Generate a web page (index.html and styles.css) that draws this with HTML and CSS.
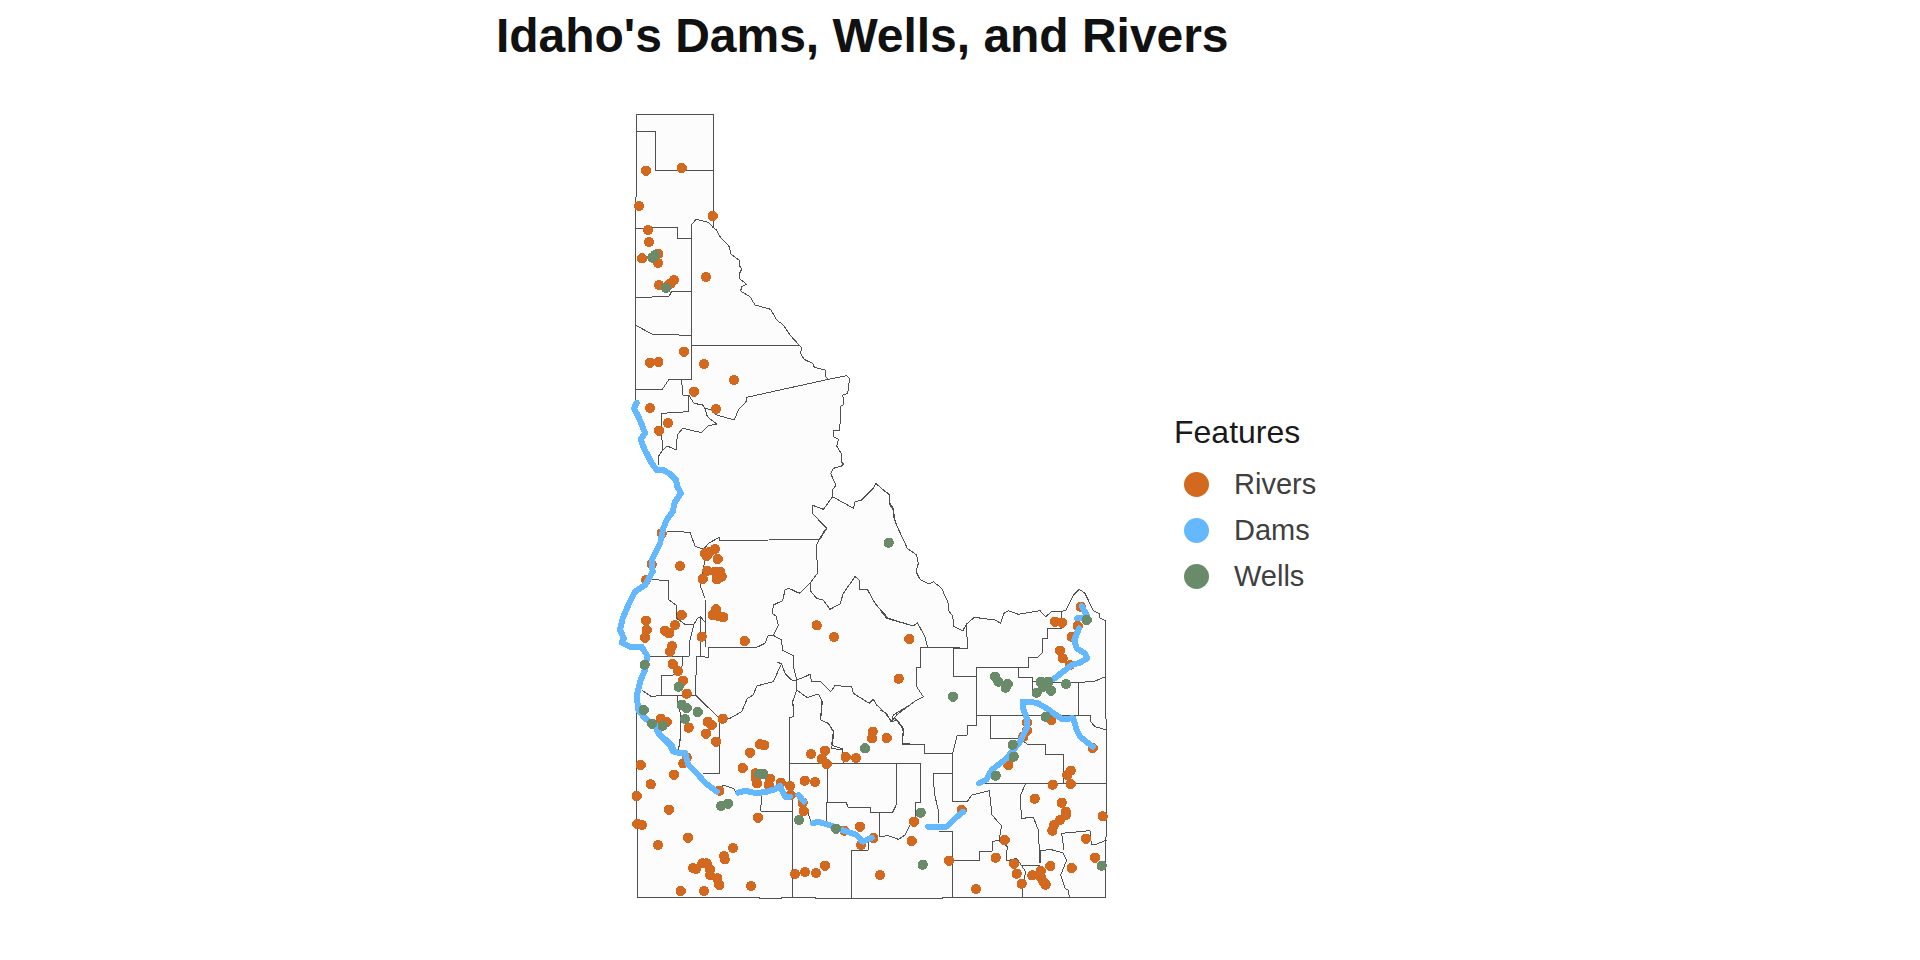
FILE: index.html
```html
<!DOCTYPE html>
<html lang="en">
<head>
    <meta charset="UTF-8">
    <title>Idaho's Dams, Wells, and Rivers</title>
    <link rel="stylesheet" href="styles.css">
</head>
<body>
    <h1 class="plot-title">Idaho's Dams, Wells, and Rivers</h1>

    <div class="plot-body">
        <!-- map units are 1/3 px, the groups are one per area of the state -->
        <svg class="map" viewBox="-60 0 1560 2430" width="520" height="810">
            <polygon class="state" points="49,43 280,43 280,383 290,390 300,410 328,440 333,463 357,480 358,497 365,507 359,520 360,537 380,553 365,560 362,573 390,590 405,615 452,628 470,660 490,675 510,705 540,738 545,742 542,760 552,778 578,790 583,802 615,810 617,830 625,838 680,827 689,835 683,880 668,885 672,913 663,918 659,990 640,993 640,1010 655,1018 650,1038 665,1063 664,1085 670,1092 665,1098 640,1105 632,1120 645,1150 645,1160 637,1170 638,1190 700,1225 705,1205 725,1200 760,1165 767,1150 808,1185 810,1210 820,1225 820,1250 830,1275 862,1345 890,1365 895,1390 888,1415 900,1438 928,1452 940,1445 965,1465 985,1510 986,1532 998,1548 1002,1580 1028,1593 1040,1572 1063,1552 1125,1560 1142,1570 1152,1540 1165,1532 1195,1543 1260,1532 1277,1550 1295,1535 1338,1530 1360,1485 1378,1468 1395,1480 1420,1532 1437,1540 1440,1555 1457,1562 1457,2392 52,2392 50,1830 55,1830 52,1780 62,1740 75,1710 82,1668 65,1642 30,1640 5,1628 12,1615 0,1590 8,1555 25,1515 45,1475 75,1455 98,1415 95,1380 120,1330 133,1290 130,1285 140,1260 158,1235 165,1205 183,1180 172,1160 168,1140 150,1122 130,1112 110,1110 95,1090 85,1070 72,1045 62,1018 75,1000 68,980 55,950 42,925 46,868 46,290 49,290"/>

            <g class="counties">
                <g>
                    <path d="M49 290V43H280V383"/>
                    <path d="M49 94H106V211H280"/>
                    <path d="M46 290V660"/>
                    <path d="M46 385L155 382H172V415H214"/>
                    <path d="M214 660V375L228 358L265 367L280 383L290 390L300 410L328 440L333 463L357 480L358 497L365 507L359 520L360 537L380 553L365 560L362 573L390 590L405 615L452 628L470 660"/>
                    <path d="M46 592H95L97 589H147L155 574H214"/>
                </g>
                <g transform="translate(0,660)">
                    <path d="M46 0V240"/>
                    <path d="M214 0V178H147L127 208H46"/>
                    <path d="M46 15L97 43L214 46"/>
                    <path d="M214 76H537"/>
                    <path d="M470 0L490 15L510 45L540 78L545 82L542 100L552 118L578 130L583 142L615 150L617 170L625 178"/>
                    <path d="M380 232L625 178L680 167L689 175L683 220L668 225L672 253L663 258L659 330L640 333L640 350L655 358L650 378L665 403L664 425L670 432L665 438L640 445L632 460L645 490L645 500L637 510L638 530L610 568L578 556L577 580L620 625L600 658H447"/>
                    <path d="M638 530L700 565L705 545L725 540L760 505L767 490L808 525L810 550L820 565L820 590L830 615L850 660"/>
                    <path d="M380 232L378 245L355 270L343 300L290 285L275 270L255 265L248 255L222 250L206 225H188L185 178"/>
                    <path d="M206 225V275L125 280V325L127 392"/>
                    <path d="M255 265L262 290L290 312L263 318L245 338L188 325L172 345L168 390L142 378L127 392L115 410V435"/>
                </g>
                <g transform="translate(-30,1290)">
                    <path d="M170 3L240 7L256 50L282 57L295 40L328 22V32L478 30L628 28L645 0"/>
                    <path d="M285 55L290 70L272 150L270 165L285 205L287 352"/>
                    <path d="M260 378L295 382L297 352H440L465 340L475 315L490 316L515 330L517 360L552 378L550 410L560 450V480"/>
                    <path d="M490 316L505 285L498 258L487 250L490 225L518 212L525 180L537 175L568 190L600 160L622 130L620 45L628 28"/>
                    <path d="M600 160L603 185L620 205L640 210L660 238L690 222L700 190L735 140L748 150L747 180L772 178L795 220L835 265L900 285"/>
                    <path d="M120 148L175 152L177 210L198 225L200 265L225 283H252L262 265L272 260L286 278"/>
                    <path d="M252 283L240 330L238 378H105"/>
                    <path d="M272 262V378"/>
                    <path d="M260 378L256 495L328 565V660"/>
                    <path d="M218 380V405L190 435H155V495H256"/>
                    <path d="M95 480L125 500L155 495"/>
                    <path d="M202 495V525L212 550V615L205 660"/>
                    <path d="M328 565H360L395 545L412 505L430 495L440 468L490 455L515 400L503 398L515 402L525 430L545 450H560"/>
                    <path d="M560 480L548 515L552 560L538 563V660"/>
                    <path d="M560 480L592 503L625 492L637 515L632 570L655 580L670 605L665 645L700 658"/>
                    <path d="M560 450L585 440L600 433L605 455H632L662 485L675 467L725 470L730 490L778 520L790 508L800 525L825 548L845 575L862 570L880 595L877 640H900"/>
                    <path d="M845 575L850 555L900 525"/>
                </g>
                <g transform="translate(-30,1800)">
                    <path d="M80 30V150L82 592H447V595H515V592H615V595H1000"/>
                    <path d="M328 100V220H278"/>
                    <path d="M212 60V110L205 155"/>
                    <path d="M330 265L340 255L370 265L380 280H455L452 333H547"/>
                    <path d="M548 0L552 50L538 53V265L547 290V592"/>
                    <path d="M635 0L632 60L655 70L672 95L665 145L697 150L700 190"/>
                    <path d="M538 190H932V307H917V360L900 375L885 405L865 418L835 407L808 410"/>
                    <path d="M652 190V307H708L715 322H782V337H848L860 312V190"/>
                    <path d="M648 307V375"/>
                    <path d="M808 337V410"/>
                    <path d="M595 340L605 375"/>
                    <path d="M725 595V525L725 450H775V425"/>
                </g>
                <g transform="translate(780,1800)">
                    <path d="M0 30L20 40L32 65L45 55L65 80L70 95L67 132H134V160H218V305H262L275 285L328 272L336 345L365 378L357 420L337 425V453H298V481H218"/>
                    <path d="M32 65L50 45L110 0"/>
                    <path d="M218 393V592"/>
                    <path d="M176 393H218"/>
                    <path d="M160 220H218"/>
                    <path d="M160 220L163 280L176 335V370"/>
                    <path d="M50 190V310L38 337H0"/>
                    <path d="M218 160L232 105H262V75H290V0"/>
                    <path d="M290 45H632V65L645 80L680 90"/>
                    <path d="M332 45V115H415L442 132H497V163H550V250"/>
                    <path d="M596 0V48"/>
                    <path d="M290 250H680"/>
                    <path d="M677 0V55L680 60V395L677 420V592H188V595H0"/>
                    <path d="M357 422L382 440L378 483L410 475L437 515L427 560V592"/>
                    <path d="M437 250L420 290L425 355L460 352L475 390L480 490V453L510 448L548 458L560 480L542 525L555 565L565 570L568 592"/>
                    <path d="M425 495H480"/>
                    <path d="M552 450L545 400L630 392L634 432H650L680 420"/>
                </g>
                <g transform="translate(780,1140)">
                    <path d="M0 22L28 43L30 75L40 90L47 130L82 205L110 225L115 250L108 275L120 298L148 312L160 305L185 325L205 370L206 392L218 408L222 440L248 453L260 432L283 412L345 420L362 430L372 400L385 392L415 403L480 392L497 410L515 395H545L558 390L580 345L598 328L615 340L640 392L657 400L660 415L677 422V660"/>
                    <path d="M545 395V445H502V475H487V518L472 533H445V562H290V660"/>
                    <path d="M260 432L262 505H220V590H290"/>
                    <path d="M240 502H122V562H108L110 620L130 650L110 660"/>
                    <path d="M0 390L20 415L100 438L112 428L135 470L142 500"/>
                    <path d="M415 562V592H458V640"/>
                    <path d="M458 605L595 608L645 603L677 590"/>
                    <path d="M595 608V660"/>
                </g>
            </g>

            <g class="rivers">
                <path d="M78 212h0M185 204h0M57 318h0M278 348h0M84 390h0M87 426h0M115 461h0M66 475h0M114 489h0M258 531h0M162 540h0M152 550h0M143 558h0M117 555h0"/>
                <path transform="translate(0,660)" d="M192 95h0M115 126h0M90 128h0M252 132h0M342 180h0M222 215h0M288 267h0M90 264h0M144 309h0M117 332h0M125 640h0"/>
                <path transform="translate(-30,1290)" d="M125 103h0M108 150h0M210 108h0M315 57h0M300 65h0M285 70h0M290 78h0M323 87h0M292 122h0M315 125h0M330 125h0M335 140h0M320 148h0M278 147h0M318 238h0M308 255h0M325 258h0M340 262h0M215 255h0M108 272h0M110 300h0M105 323h0M195 285h0M165 302h0M178 310h0M275 320h0M404 333h0M186 348h0M180 365h0M188 402h0M204 423h0M219 452h0M230 491h0M338 566h0M152 566h0M170 576h0M293 575h0M305 585h0M288 611h0M236 593h0M318 635h0M620 286h0M672 321h0M866 446h0M898 327h0M788 605h0M786 625h0M830 624h0M450 643h0M463 646h0"/>
                <path transform="translate(-30,1800)" d="M420 158h0M603 162h0M645 152h0M635 177h0M650 192h0M707 171h0M738 174h0M230 172h0M220 190h0M92 195h0M192 224h0M122 253h0M80 288h0M398 204h0M437 220h0M437 235h0M441 250h0M480 236h0M476 255h0M512 248h0M540 258h0M542 285h0M584 242h0M615 246h0M328 272h0M177 329h0M578 308h0M581 333h0M444 353h0M82 372h0M96 375h0M703 392h0M750 380h0M790 414h0M753 435h0M234 413h0M144 435h0M369 444h0M342 468h0M344 478h0M249 504h0M258 507h0M277 490h0M290 490h0M300 508h0M300 525h0M322 535h0M328 555h0M212 573h0M282 573h0M423 558h0M555 522h0M585 516h0M618 519h0M645 497h0M810 525h0"/>
                <path transform="translate(780,1800)" d="M441 68h0M514 60h0M441 92h0M430 110h0M385 195h0M245 330h0M572 212h0M562 225h0M572 252h0M518 254h0M464 296h0M545 308h0M557 335h0M558 345h0M540 360h0M522 375h0M517 392h0M668 349h0M102 365h0M95 423h0M207 482h0M288 567h0M374 420h0M347 473h0M402 491h0M410 521h0M425 551h0M457 526h0M482 513h0M482 530h0M490 545h0M497 554h0M511 498h0M575 504h0M618 416h0M645 473h0M638 144h0"/>
                <path transform="translate(780,1140)" d="M525 425h0M546 428h0M593 438h0M575 470h0M540 512h0M548 535h0M570 555h0M602 380h0"/>
            </g>

            <g class="dams">
                <path transform="translate(0,660)" d="M50 248L42 265L55 290L68 320L75 340L62 358L72 385L85 410L95 430L110 450H130L150 462L168 480L172 500L183 520L165 545L158 575L140 600L130 625L122 660"/>
                <path transform="translate(-30,1290)" d="M150 40L125 90L128 125L105 165L75 185L55 225L38 265L30 300L42 325L35 338L60 350H95L112 378L105 420L92 450L82 490V515L85 540L105 565L140 590L150 615L185 645L190 660"/>
                <g transform="translate(-30,1800)">
                    <path d="M135 75L145 100L180 135L190 155L215 160L225 158L235 195L265 225L285 248L320 275"/>
                    <path d="M385 278L405 272L440 280L470 275L495 268L510 258L525 290H540"/>
                    <path d="M565 285L582 305"/>
                    <path d="M608 370L625 365L665 378L695 390L740 405L758 425L785 413"/>
                </g>
                <g transform="translate(780,1800)">
                    <path d="M145 380H200L225 355L250 335"/>
                    <path d="M297 250L320 238L335 210L380 175L420 125L440 85V55L428 20V5L470 8L500 25L545 57L580 55L590 90L600 110L638 140"/>
                </g>
                <path transform="translate(780,1140)" d="M520 598L575 555L600 548L622 535L615 520L590 505L583 480L597 445M592 415H618L620 405L605 378"/>
            </g>

            <g class="wells">
                <path d="M105 465h0M97 473h0M138 564h0"/>
                <path transform="translate(-30,1290)" d="M836 38h0M104 404h0M206 470h0M215 524h0M230 534h0M263 546h0M225 567h0M101 540h0M126 581h0M158 587h0M765 655h0"/>
                <path transform="translate(-30,1800)" d="M448 222h0M460 222h0M333 318h0M354 311h0M567 360h0M678 386h0"/>
                <path transform="translate(780,1800)" d="M398 134h0M401 170h0M347 227h0M122 338h0M128 494h0M665 497h0M497 50h0"/>
                <path transform="translate(780,1140)" d="M219 650h0M345 590h0M355 605h0M383 612h0M377 623h0M482 605h0M505 605h0M490 620h0M513 632h0M470 638h0M558 612h0M620 420h0"/>
            </g>
        </svg>

        <div class="legend">
            <div class="legend-title">Features</div>
            <div class="legend-row"><span class="legend-key key-rivers"></span>Rivers</div>
            <div class="legend-row"><span class="legend-key key-dams"></span>Dams</div>
            <div class="legend-row"><span class="legend-key key-wells"></span>Wells</div>
        </div>
    </div>
</body>
</html>
```

FILE: styles.css
```css
body {
    margin: 0;
    background-color: #fff;
    font-family: "Liberation Sans", Arial, sans-serif;
}
.plot-title {
    height: 100px;
    margin: 0;
    padding: 8px 0 0 496px;
    box-sizing: border-box;
    font-size: 48px;
    line-height: 55px;
    letter-spacing: -0.03px;
    color: #111;
}
.plot-body {
    display: flex;
    align-items: center;
    padding-left: 600px;
}
.map {
    display: block;
    flex: none;
    shape-rendering: crispEdges;
}
.map path {
    fill: none;
    stroke-linejoin: round;
}
.state {
    fill: #fcfcfc;
}
.counties path {
    stroke: #505050;
    stroke-width: 3;
}
.rivers path, .wells path {
    stroke-width: 31;
    stroke-linecap: round;
}
.rivers path {
    stroke: #d2691e;
}
.wells path {
    stroke: #698b69;
}
.dams path {
    stroke: #63b8ff;
    stroke-width: 18;
    stroke-linecap: round;
}
.legend {
    margin-left: 54px;
    padding-top: 4px;
}
.legend-title {
    margin-bottom: 11px;
    font-size: 32px;
    line-height: 36px;
    color: #1a1a1a;
}
.legend-row {
    display: flex;
    align-items: center;
    gap: 25px;
    height: 46.3px;
    padding-left: 10px;
    font-size: 29px;
    color: #404040;
}
.legend-key {
    width: 25px;
    height: 25px;
    border-radius: 50%;
}
.key-rivers {
    background-color: #d2691e;
}
.key-dams {
    background-color: #63b8ff;
}
.key-wells {
    background-color: #698b69;
}
```
